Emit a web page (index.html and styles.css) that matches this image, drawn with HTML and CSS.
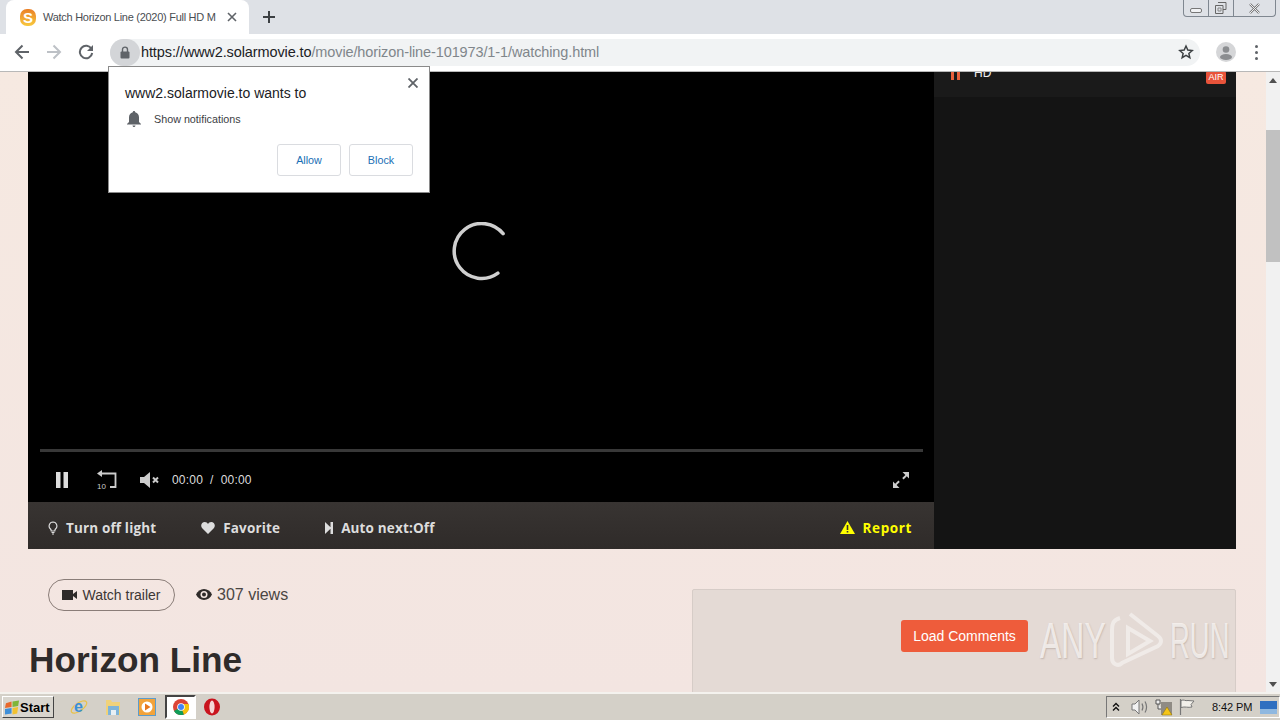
FILE: index.html
```html
<!DOCTYPE html>
<html lang="en">
<head>
    <meta charset="UTF-8">
    <title>Watch Horizon Line (2020) Full HD Movie</title>
    <link rel="stylesheet" href="styles.css">
</head>
<body>
    <!-- browser chrome -->
    <div class="tabstrip">
        <div class="tab">
            <span class="favicon">S</span>
            <span class="tab-title">Watch Horizon Line (2020) Full HD M</span>
            <svg class="tab-close" width="10" height="10" viewBox="0 0 10 10"><path d="M1 1l8 8M9 1l-8 8" stroke="#5f6368" stroke-width="1.6"/></svg>
        </div>
        <svg class="new-tab" width="12" height="12" viewBox="0 0 12 12"><path d="M6 0v12M0 6h12" stroke="#3c4043" stroke-width="2"/></svg>
        <div class="win-controls">
            <span class="win-btn win-min"><i></i></span>
            <span class="win-btn win-max">
                <svg width="14" height="12" viewBox="0 0 14 12"><path d="M4 .5h8v7H9M1.500 3.500h7.500v8H1.500z" fill="none" stroke="#666"/><path d="M4 6h3v3H4z" fill="none" stroke="#888"/></svg>
            </span>
            <span class="win-btn win-close">
                <svg width="13" height="11" viewBox="0 0 13 11"><path d="M2 1l9 9M11 1l-9 9" stroke="#777" stroke-width="2.400"/><path d="M2 1l9 9M11 1l-9 9" stroke="#eee" stroke-width="1"/></svg>
            </span>
        </div>
    </div>
    <div class="toolbar">
        <svg class="nav-icon" width="16" height="16" viewBox="0 0 16 16"><path d="M15 8H2.500M8.500 1.500L2 8l6.500 6.500" fill="none" stroke="#5f6368" stroke-width="2"/></svg>
        <svg class="nav-icon" width="16" height="16" viewBox="0 0 16 16"><path d="M1 8h12.500M7.500 1.500L14 8l-6.500 6.500" fill="none" stroke="#bdc1c6" stroke-width="2"/></svg>
        <svg class="nav-icon" width="16" height="16" viewBox="0 0 16 16"><path d="M13.500 5A6.200 6.200 0 1 0 14.200 9" fill="none" stroke="#5f6368" stroke-width="2"/><path d="M15 1v6H9z" fill="#5f6368"/></svg>
        <div class="omnibox">
            <span class="lock-chip">
                <svg width="10" height="13" viewBox="0 0 10 13"><path d="M2.500 6V3.600a2.500 2.500 0 0 1 5 0V6" fill="none" stroke="#5f6368" stroke-width="1.400"/><rect x="0.500" y="5.500" width="9" height="7" rx="1" fill="#5f6368"/></svg>
            </span>
            <span class="url"><b>https://www2.solarmovie.to</b>/movie/horizon-line-101973/1-1/watching.html</span>
            <svg class="star" width="16" height="16" viewBox="0 0 24 24"><path d="M12 3l2.700 6.100 6.600.6-5 4.400 1.500 6.500L12 17.200 6.200 20.600l1.500-6.500-5-4.400 6.600-.6z" fill="none" stroke="#3c4043" stroke-width="2.200"/></svg>
        </div>
        <span class="avatar">
            <svg width="20" height="20" viewBox="0 0 20 20"><circle cx="10" cy="10" r="10" fill="#d5d6d8"/><circle cx="10" cy="7.500" r="3.300" fill="#8b8d90"/><ellipse cx="10" cy="15" rx="6" ry="3" fill="#8b8d90"/></svg>
        </span>
        <span class="menu-dots"><i></i><i></i><i></i></span>
    </div>

    <div class="viewport">
        <div class="page">
            <div class="player">
                <div class="player-main">
                    <div class="video">
                        <svg class="spinner" width="60" height="62" viewBox="0 0 60 62"><path d="M52.100 11.700A27.500 27.500 0 1 0 46.900 51.200" fill="none" stroke="#cfcfcf" stroke-width="3.500" stroke-linecap="round"/></svg>
                        <div class="progress"></div>
                        <div class="controls">
                            <svg width="12" height="16" viewBox="0 0 12 16"><path d="M0 0h4.500v16H0zM7.500 0H12v16H7.500z" fill="#ddd"/></svg>
                            <svg class="ctl-replay" width="20" height="20" viewBox="0 0 20 20"><path d="M5 0L0 3.500 5 7z" fill="#ccc"/><path d="M4 3.500h14.500V17H13" fill="none" stroke="#ccc" stroke-width="1.800"/><text x="0" y="19" class="ctl-ten">10</text></svg>
                            <svg class="ctl-mute" width="20" height="16" viewBox="0 0 20 16"><path d="M0 5h4l6-5v16l-6-5H0z" fill="#ccc"/><path d="M13 5.500l5 5M18 5.500l-5 5" stroke="#ccc" stroke-width="2"/></svg>
                            <span class="time">00:00 &nbsp;/ &nbsp;00:00</span>
                            <svg class="ctl-full" width="16" height="16" viewBox="0 0 16 16"><path d="M16 0v6.500l-2.200-2.200-3.200 3.200-1.400-1.400 3.200-3.200L9.500 0zM0 16V9.500l2.200 2.200 3.200-3.200 1.400 1.400-3.200 3.200L6.500 16z" fill="#ccc"/></svg>
                        </div>
                    </div>
                    <div class="actions">
                        <span class="action">
                            <svg width="10" height="14" viewBox="0 0 10 14"><path d="M5 1a4 4 0 0 0-2.500 7c.6.600.7 1.200.7 2h3.600c0-.8.100-1.400.7-2A4 4 0 0 0 5 1z" fill="none" stroke="#ddd" stroke-width="1.200"/><path d="M3.500 11.500h3M4 13h2" stroke="#ddd"/></svg>
                            Turn off light
                        </span>
                        <span class="action">
                            <svg width="14" height="12" viewBox="0 0 14 12"><path d="M7 12L1 6C-1 3 1 0 3.800 0 5.200 0 6.400.8 7 2 7.600.8 8.800 0 10.200 0 13 0 15 3 13 6z" fill="#ddd"/></svg>
                            Favorite
                        </span>
                        <span class="action">
                            <svg width="8" height="12" viewBox="0 0 8 12"><path d="M0 0l5.500 5.200V0H8v12H5.500V6.800L0 12z" fill="#ddd"/></svg>
                            Auto next:Off
                        </span>
                        <span class="action report">
                            <svg width="15" height="13" viewBox="0 0 15 13"><path d="M7.500 0L15 13H0z" fill="#ff0"/><path d="M6.700 4h1.600v5H6.700zM6.700 10h1.600v1.600H6.700z" fill="#36312f"/></svg>
                            Report
                        </span>
                    </div>
                </div>
                <div class="player-side">
                    <div class="server">
                        <span class="server-bars"><i></i><i></i></span>
                        <span class="server-name">HD</span>
                        <span class="air-badge">AIR</span>
                    </div>
                </div>
            </div>

            <div class="info">
                <div class="info-left">
                    <div class="meta">
                        <a class="trailer-btn">
                            <svg width="15" height="10" viewBox="0 0 15 10"><path d="M0 0h11v10H0zM11 4l4-3v8l-4-3z" fill="#2f2b2a"/></svg>
                            Watch trailer
                        </a>
                        <span class="views">
                            <svg width="16" height="11" viewBox="0 0 16 11"><path d="M8 0C4.500 0 1.500 2.200 0 5.500 1.500 8.800 4.500 11 8 11s6.500-2.200 8-5.500C14.500 2.200 11.500 0 8 0z" fill="#2f2b2a"/><circle cx="8" cy="5.500" r="3.500" fill="#f4e7e2"/><circle cx="8" cy="5.500" r="2" fill="#2f2b2a"/></svg>
                            307 views
                        </span>
                    </div>
                    <h1 class="title">Horizon Line</h1>
                </div>
                <div class="comments">
                    <button class="load-btn">Load Comments</button>
                </div>
            </div>
        </div>
        <div class="scrollbar">
            <span class="arrow-up"></span>
            <div class="thumb"></div>
            <span class="arrow-down"></span>
        </div>
    </div>

    <div class="taskbar">
        <div class="start-btn">
            <svg width="15" height="15" viewBox="0 0 16 15"><path d="M1 3l6-2v6L0 8z" fill="#e8682c"/><path d="M8 1l7-1-1 6-6 1z" fill="#7fb539"/><path d="M0 9l7-1v6l-7 1z" fill="#3f8fd8"/><path d="M8 8l6-1-1 7-5 1z" fill="#f2c230"/></svg>
            Start
        </div>
        <div class="quick">
            <svg width="18" height="18" viewBox="0 0 18 18"><ellipse cx="9" cy="9" rx="9" ry="4" transform="rotate(-35 9 9)" fill="none" stroke="#e8c24a" stroke-width="1.200"/><text x="4" y="14" class="ie-letter">e</text></svg>
            <svg width="18" height="18" viewBox="0 0 18 18"><path d="M2 2h5l1 2h8v13H2z" fill="#f0d27a"/><path d="M4 8h11v9H4z" fill="#7fb4d8"/><path d="M7 12h5v5H7z" fill="#e8f0f4"/></svg>
            <svg width="18" height="18" viewBox="0 0 18 18"><rect x="0.500" y="0.500" width="17" height="17" fill="#f3a33a" stroke="#5c9ccc"/><circle cx="9" cy="9" r="5.500" fill="#fff"/><path d="M7 5.500L12.500 9 7 12.500z" fill="#e8781f"/></svg>
            <span class="active-app">
                <svg width="16" height="16" viewBox="0 0 16 16"><circle cx="8" cy="8" r="8" fill="#db4437"/><path d="M8 8L1 12a8 8 0 0 0 7 4c1 0 2-.2 3-.6z" fill="#0f9d58"/><path d="M8 8l3 7.400A8 8 0 0 0 15.500 5H8z" fill="#f4c20d"/><circle cx="8" cy="8" r="3.800" fill="#fff"/><circle cx="8" cy="8" r="3" fill="#4285f4"/></svg>
            </span>
            <svg width="16" height="18" viewBox="0 0 16 18"><ellipse cx="8" cy="9" rx="8" ry="8.500" fill="#c9141e"/><ellipse cx="8" cy="9" rx="2.600" ry="6.500" fill="#f4d6d6"/></svg>
        </div>
        <div class="tray">
            <svg width="8" height="10" viewBox="0 0 8 10"><path d="M1 4.500l3-3 3 3M1 8.500l3-3 3 3" fill="none" stroke="#111" stroke-width="1.400"/></svg>
            <svg class="tray-sound" width="18" height="16" viewBox="0 0 18 16"><path d="M1 5h3l4-4v14l-4-4H1z" fill="#f2f2f2" stroke="#777"/><path d="M11 4.500c1.200 2.300 1.200 4.700 0 7M14 2.500c2 3.500 2 7.500 0 11" fill="none" stroke="#777" stroke-width="1.200"/></svg>
            <svg width="18" height="18" viewBox="0 0 18 18"><path d="M1 2h4v4H1zM3 6v5h4" fill="#eee" stroke="#555"/><rect x="6" y="4" width="11" height="13" fill="#8f8b84"/><path d="M12 9l5 8H7z" fill="#f5c518" stroke="#8a6d00" stroke-width=".5"/></svg>
            <svg width="16" height="16" viewBox="0 0 16 16"><path d="M1.500 0v16" stroke="#777" stroke-width="1.200"/><path d="M2 1.500c3-1.400 4 .8 7 0l6 .5-3 3.500 1 2.500c-4 1-7-.8-11 .5z" fill="#f2f0ea" stroke="#777"/></svg>
            <span class="clock">8:42 PM</span>
            <svg class="show-desktop" width="17" height="13" viewBox="0 0 17 13"><rect width="17" height="13" fill="#2f6fc0"/><rect y="8" width="17" height="5" fill="#8fb8e0"/></svg>
        </div>
    </div>

    <!-- overlays -->
    <div class="permission">
        <svg class="perm-close" width="10" height="10" viewBox="0 0 10 10"><path d="M.5.500l9 9M9.500.500l-9 9" stroke="#5f6368" stroke-width="1.800"/></svg>
        <div class="perm-title">www2.solarmovie.to wants to</div>
        <div class="perm-row">
            <svg width="14" height="16" viewBox="0 0 14 16"><path d="M7 0c.7 0 1.200.5 1.200 1.200C10.500 1.800 12 3.800 12 6.200V11l2 2v.5H0V13l2-2V6.200C2 3.800 3.500 1.800 5.800 1.200 5.800.5 6.300 0 7 0zM5.500 14.500h3C8.500 15.400 7.800 16 7 16s-1.500-.6-1.500-1.500z" fill="#5f6368"/></svg>
            Show notifications
        </div>
        <div class="perm-buttons">
            <button class="perm-btn">Allow</button>
            <button class="perm-btn">Block</button>
        </div>
    </div>
    <div class="watermark">
        <span class="wm-any">ANY</span>
        <svg width="58" height="62" viewBox="0 0 58 62"><path d="M12 8C5 10 4 14 4 20v28c0 6 6 9 10 5L50 36c4-3 4-7 0-10L22 4" fill="none" stroke="#fff" stroke-opacity=".45" stroke-width="4"/><path d="M20 18v26l22-13z" fill="none" stroke="#fff" stroke-opacity=".45" stroke-width="4"/></svg>
        <span class="wm-run">RUN</span>
    </div>
</body>
</html>
```

FILE: styles.css
```css
* {
    box-sizing: border-box;
}
html, body {
    height: 100%;
}
body {
    margin: 0;
    width: 1280px;
    height: 720px;
    overflow: hidden;
    display: flex;
    flex-direction: column;
    font-family: "Liberation Sans", Arial, sans-serif;
    background: #f4e7e2;
}

/* tab strip */
.tabstrip {
    height: 34px;
    flex: none;
    display: flex;
    align-items: center;
    background: #dee1e6;
}
.tab {
    width: 243px;
    height: 34px;
    margin-left: 6px;
    padding-left: 14px;
    display: flex;
    align-items: center;
    background: #fff;
    border-radius: 8px 8px 0 0;
}
.favicon {
    width: 16px;
    height: 17px;
    border-radius: 7px;
    background: linear-gradient(#ea7f26, #f8c93f);
    color: #fff;
    font-size: 15px;
    font-weight: bold;
    line-height: 17px;
    text-align: center;
}
.tab-title {
    width: 175px;
    margin-left: 7px;
    white-space: nowrap;
    font-size: 11px;
    letter-spacing: -0.28px;
    color: #4a4d51;
}
.tab-close {
    margin-left: 9px;
}
.new-tab {
    margin-left: 14px;
}
.win-controls {
    margin-left: auto;
    margin-right: 4px;
    align-self: flex-start;
    height: 17px;
    display: flex;
    border: 1px solid #7f8790;
    border-top: none;
    border-radius: 0 0 4px 4px;
}
.win-btn {
    display: flex;
    align-items: center;
    justify-content: center;
}
.win-min {
    width: 25px;
    border-right: 1px solid #7f8790;
}
.win-min i {
    width: 12px;
    height: 5px;
    margin-top: 4px;
    border: 1px solid #777;
    border-radius: 2px;
    background: #f1f2f4;
}
.win-max {
    width: 25px;
    border-right: 1px solid #7f8790;
}
.win-close {
    width: 41px;
}

/* toolbar */
.toolbar {
    height: 38px;
    margin-bottom: -1px;
    flex: none;
    display: flex;
    align-items: center;
    padding: 0 0 1px 14px;
    background: #fff;
    border-bottom: 1px solid #b8b8b8;
    position: relative;
}
.nav-icon {
    margin-right: 16px;
}
.omnibox {
    width: 1090px;
    height: 27px;
    display: flex;
    align-items: center;
    background: #f1f3f4;
    border-radius: 14px;
}
.lock-chip {
    width: 30px;
    height: 27px;
    display: flex;
    align-items: center;
    justify-content: center;
    border-radius: 14px;
    background: #d3d5d8;
}
.url {
    margin-left: 1px;
    font-size: 14.5px;
    letter-spacing: -0.11px;
    color: #80868b;
    white-space: nowrap;
}
.url b {
    font-weight: normal;
    color: #202124;
}
.star {
    margin-left: auto;
    margin-right: 6px;
}
.avatar {
    margin-left: 16px;
    height: 20px;
}
.menu-dots {
    margin-left: 19px;
    display: flex;
    flex-direction: column;
    gap: 3px;
}
.menu-dots i {
    width: 3px;
    height: 3px;
    background: #5f6368;
    border-radius: 50%;
}

/* page */
.viewport {
    flex: 1;
    min-height: 0;
    display: flex;
}
.page {
    flex: 1;
    min-width: 0;
    overflow: hidden;
    padding-left: 28px;
    padding-right: 30px;
    background: linear-gradient(#f6e9e1, #f3e5e1);
}
.player {
    height: 478px;
    display: flex;
}
.player-main {
    width: 906px;
    display: flex;
    flex-direction: column;
}
.video {
    height: 431px;
    flex: none;
    display: flex;
    flex-direction: column;
    background: #000;
}
.spinner {
    margin: 151px 0 0 423px;
    flex: none;
}
.progress {
    height: 3px;
    margin: 165px 11px 0 12px;
    background: #383838;
}
.controls {
    height: 50px;
    display: flex;
    align-items: center;
    padding: 6px 25px 0 28px;
    color: #ddd;
}
.ctl-replay {
    margin-left: 29px;
}
.ctl-ten {
    font-size: 8px;
    fill: #ccc;
}
.ctl-mute {
    margin-left: 23px;
}
.time {
    margin-left: 12px;
    font-size: 12px;
    letter-spacing: 0.2px;
}
.ctl-full {
    margin-left: auto;
}
.actions {
    height: 47px;
    flex: none;
    display: flex;
    align-items: center;
    gap: 45px;
    padding: 4px 22px 0 20px;
    background: linear-gradient(#383432, #2f2b29);
}
.action {
    display: flex;
    align-items: center;
    gap: 8px;
    font-family: "Open Sans", sans-serif;
    font-size: 13.5px;
    letter-spacing: 0.15px;
    font-weight: 700;
    color: #ddd;
}
.report {
    margin-left: auto;
    letter-spacing: 0.6px;
    color: #ff0;
}
.player-side {
    flex: 1;
    background: #141414;
}
.server {
    height: 26px;
    display: flex;
    background: #1a1a1a;
    padding: 0 10px 0 17px;
    overflow: hidden;
}
.server-bars {
    display: flex;
    gap: 3px;
    height: 9px;
}
.server-bars i {
    width: 3px;
    background: #e8603c;
}
.server-name {
    margin: -5px 0 0 14px;
    font-size: 12px;
    color: #eee;
}
.air-badge {
    margin-left: auto;
    height: 13px;
    width: 20px;
    background: #e8533a;
    border-radius: 2px;
    color: #fff;
    font-size: 9px;
    line-height: 12px;
    text-align: center;
}

/* below the player */
.info {
    display: flex;
}
.info-left {
    width: 664px;
    flex: none;
    padding-top: 30px;
}
.meta {
    display: flex;
    align-items: center;
    gap: 21px;
    margin-left: 20px;
}
.trailer-btn {
    width: 127px;
    height: 32px;
    display: flex;
    align-items: center;
    justify-content: center;
    gap: 5px;
    border: 1px solid #8a7d78;
    border-radius: 16px;
    font-size: 14px;
    color: #3c3735;
}
.views {
    display: flex;
    align-items: center;
    gap: 5px;
    margin-top: -1px;
    font-size: 16px;
    color: #4a4543;
}
.title {
    margin: 29px 0 0 1px;
    font-size: 35.2px;
    line-height: 40px;
    font-weight: bold;
    color: #2f2b2a;
}
.comments {
    width: 544px;
    height: 200px;
    flex: none;
    margin-top: 40px;
    padding: 30px 207px 0 0;
    display: flex;
    justify-content: flex-end;
    align-items: flex-start;
    background: #e4dad5;
    border: 1px solid #d6ccc7;
    border-radius: 2px;
}
.load-btn {
    width: 127px;
    height: 32px;
    border: none;
    border-radius: 3px;
    background: #ee5c3b;
    color: #fff;
    font-family: "Liberation Sans", Arial, sans-serif;
    font-size: 14px;
}

/* scrollbar */
.scrollbar {
    width: 14px;
    flex: none;
    background: #f1f1f1;
    display: flex;
    flex-direction: column;
    align-items: center;
}
.arrow-up {
    margin-top: 7px;
    border: 4px solid transparent;
    border-top: none;
    border-bottom: 5px solid #505050;
}
.thumb {
    width: 14px;
    height: 132px;
    margin-top: 47px;
    background: #c1c1c1;
}
.arrow-down {
    margin-top: auto;
    margin-bottom: 5px;
    border: 4px solid transparent;
    border-bottom: none;
    border-top: 5px solid #505050;
}

/* windows taskbar */
.taskbar {
    height: 28px;
    flex: none;
    display: flex;
    align-items: center;
    padding-left: 2px;
    background: #d4d0c8;
    border-top: 2px solid #f4f2ee;
}
.start-btn {
    width: 52px;
    height: 22px;
    display: flex;
    align-items: center;
    padding-left: 2px;
    background: #d8d5ce;
    border: 1px solid;
    border-color: #fff #444 #444 #fff;
    font-size: 13px;
    font-weight: bold;
    color: #000;
}
.quick {
    display: flex;
    align-items: center;
    gap: 16px;
    margin-left: 16px;
}
.ie-letter {
    font-size: 16px;
    font-weight: bold;
    fill: #3b8fd4;
}
.active-app {
    width: 31px;
    height: 24px;
    margin: 0 -8px 0 -7px;
    display: flex;
    align-items: center;
    justify-content: center;
    background: #fff;
    border: 2px solid;
    border-color: #444 #fff #fff #444;
}
.tray {
    margin-left: auto;
    width: 174px;
    height: 22px;
    display: flex;
    align-items: center;
    gap: 6px;
    padding-left: 5px;
    border: 1px solid;
    border-color: #777 #fff #fff #777;
}
.tray-sound {
    margin-left: 5px;
}
.clock {
    margin-left: 11px;
    font-size: 11px;
    letter-spacing: -0.1px;
    white-space: nowrap;
    color: #111;
}
.show-desktop {
    margin-left: auto;
    margin-right: 2px;
}

/* permission popup, over toolbar and video */
.permission {
    position: absolute;
    left: 108px;
    top: 66px;
    width: 322px;
    height: 127px;
    padding: 19px 16px 0;
    background: #fff;
    border: 1px solid #8a8a8a;
}
.perm-close {
    position: absolute;
    top: 11px;
    right: 11px;
}
.perm-title {
    font-size: 14px;
    line-height: 15px;
    color: #202124;
}
.perm-row {
    display: flex;
    align-items: center;
    gap: 13px;
    margin: 10px 0 0 2px;
    font-size: 10.75px;
    color: #3c4043;
}
.perm-buttons {
    display: flex;
    justify-content: flex-end;
    gap: 8px;
    margin-top: 17px;
}
.perm-btn {
    width: 64px;
    height: 32px;
    padding: 0;
    background: #fff;
    border: 1px solid #dadce0;
    border-radius: 3px;
    font-family: "Liberation Sans", Arial, sans-serif;
    font-size: 10.75px;
    color: #1a6fb5;
}

/* watermark */
.watermark {
    position: absolute;
    left: 1040px;
    top: 610px;
    display: flex;
    align-items: center;
    gap: 4px;
    font-size: 50px;
    color: rgba(250, 246, 244, 0.8);
    text-shadow: 1px 1px 2px rgba(90, 70, 60, 0.25);
}
.watermark span {
    display: block;
    width: 64px;
    transform-origin: left center;
    white-space: nowrap;
}
.wm-any {
    transform: scaleX(0.64);
}
.wm-run {
    transform: scaleX(0.55);
}
```
